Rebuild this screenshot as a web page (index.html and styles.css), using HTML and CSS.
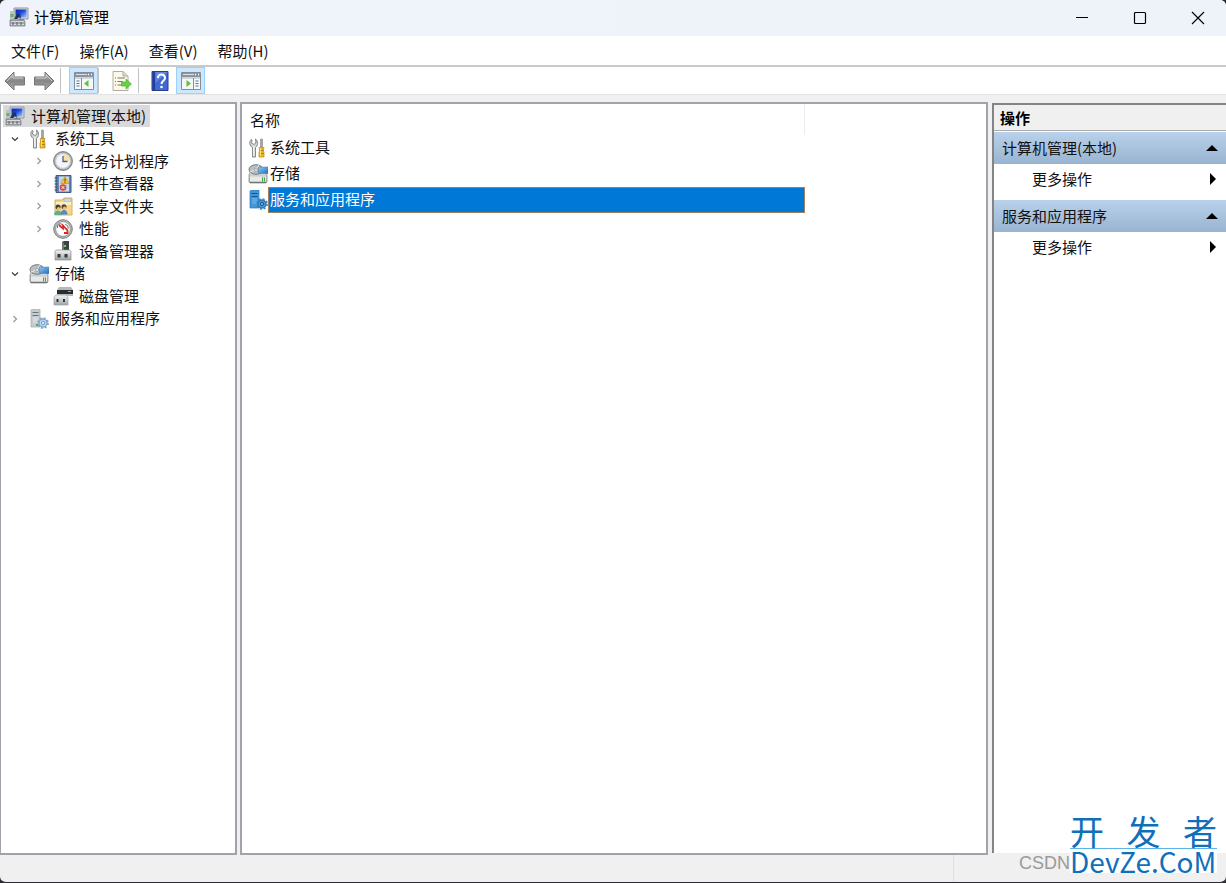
FILE: index.html
```html
<!DOCTYPE html>
<html lang="zh-CN">
<head>
<meta charset="utf-8">
<title>计算机管理</title>
<link rel="stylesheet" href="styles.css">
</head>
<body>
<svg class="sprite" aria-hidden="true">
  <defs>
    <linearGradient id="g-metal" x1="0" y1="0" x2="0" y2="1"><stop offset="0" stop-color="#f4f4f2"/><stop offset="1" stop-color="#9fa3a6"/></linearGradient>
    <linearGradient id="g-arrow" x1="0" y1="0" x2="0" y2="1"><stop offset="0" stop-color="#c4c4c4"/><stop offset=".5" stop-color="#858585"/><stop offset="1" stop-color="#b0b0b0"/></linearGradient>
    <linearGradient id="g-screen" x1="0" y1="0" x2="1" y2="1"><stop offset="0" stop-color="#0b20a8"/><stop offset=".45" stop-color="#1c49dc"/><stop offset="1" stop-color="#a9cdfb"/></linearGradient>
    <linearGradient id="g-blue" x1="0" y1="0" x2="1" y2="1"><stop offset="0" stop-color="#8fc8f3"/><stop offset="1" stop-color="#1d6fc0"/></linearGradient>
  </defs>
  <symbol id="i-computer" viewBox="0 0 20 20">
    <path d="M5 1h14v11H5z" fill="#d5d8dc" stroke="#92979f"/>
    <path d="M6.500 2.500h11v8h-11z" fill="url(#g-screen)"/>
    <path d="M9 12h6v2H9z" fill="#8a8d92"/>
    <path d="M1 4h4v9H1z" fill="#b9c3c5"/><path d="M1.500 7h3v3h-3z" fill="#5dbb45"/>
    <path d="M5 12l2.500-4 1.500-2 2 1 1 5-2-2-2 2z" fill="#20315c"/>
    <path d="M1 13h14l1 2v4H1z" fill="#a3a8ac" stroke="#73787d" stroke-width=".7"/>
    <path d="M2 14.500h13M2 17.500h13" stroke="#d9dcde"/><path d="M4 15v3M8 15v3M12 15v3" stroke="#596066"/>
  </symbol>
  <symbol id="i-tools" viewBox="0 0 20 20">
    <path d="M4.500 19V9.500C1.500 8 1 4 3 1.500l1 .5-.5 3L6 6.500 8 5l-.5-4C10.500 3 10 8 7.500 9.500V19z" fill="#d2d4d3" stroke="#85898a"/>
    <path d="M5.800 8v10" stroke="#fff"/>
    <path d="M12.500 1h2v8h-2z" fill="#a2a8aa" stroke="#757b7d" stroke-width=".5"/>
    <path d="M11 9.500h5l-.8 3 .8 2v4.500h-5v-4.500l.8-2z" fill="#f0b51a" stroke="#c08516" stroke-width=".7"/>
    <path d="M11.500 12.500h4M12 15.500h3.500" stroke="#936616" stroke-width=".8"/><path d="M12.600 10v8" stroke="#ffe478"/>
  </symbol>
  <symbol id="i-clock" viewBox="0 0 20 20">
    <circle cx="10" cy="10" r="9.400" fill="#a5a7aa" stroke="#7d7f83"/><circle cx="10" cy="10" r="8" fill="#d0d1d3"/>
    <circle cx="10" cy="10" r="6.800" fill="#f3f5fa"/><path d="M10 10V3.200A6.800 6.800 0 0 1 16.800 10z" fill="#f7dfaa"/>
    <path d="M10 5v5.500h4.500" fill="none" stroke="#4e6080" stroke-width="1.300"/>
  </symbol>
  <symbol id="i-event" viewBox="0 0 20 20">
    <path d="M3 1.500h15v17H3z" fill="#6386b5" stroke="#3e5d87"/><path d="M6 2.500h10v15H6z" fill="#c9daed"/>
    <path d="M7 6h7M7 9h7M7 12h7M7 15h7" stroke="#a7bad1"/>
    <path d="M1.500 4h3M1.500 7h3M1.500 10h3M1.500 13h3M1.500 16h3" stroke="#3b4a5f"/>
    <path d="M12 2.500l4 7H8z" fill="#ffc52f" stroke="#c78816" stroke-width=".6"/><path d="M12 4.500v3M12 8v1" stroke="#4c3b0c"/>
    <circle cx="10" cy="13.500" r="3.300" fill="#dc4a3e"/><path d="M8.700 12.200l2.600 2.600m0-2.600l-2.600 2.600" stroke="#fff"/>
  </symbol>
  <symbol id="i-folder" viewBox="0 0 20 20">
    <path d="M2 4h7l2-2h8v17H2z" fill="#f3d78a" stroke="#d3b265"/><path d="M11 3h7v2h-7z" fill="#e7eef8" stroke="#87a6cf" stroke-width=".6"/><path d="M3 6h15v3H3z" fill="#fbeebc"/>
    <circle cx="5" cy="11" r="2.500" fill="#4e4030"/><circle cx="5.500" cy="12.500" r="1.600" fill="#edbb8e"/><path d="M1 19c0-6 8-6 8 0z" fill="#62b184"/>
    <circle cx="11" cy="10.800" r="2.500" fill="#5e4330"/><circle cx="11.500" cy="12.200" r="1.600" fill="#edbb8e"/><path d="M7.500 18.500c0-6 7-6 7 0z" fill="#5188c7"/>
  </symbol>
  <symbol id="i-perf" viewBox="0 0 20 20">
    <circle cx="10" cy="10" r="9.300" fill="#b4b4b4" stroke="#7d7f81"/><circle cx="10" cy="10" r="7.300" fill="#fff" stroke="#7c7e80" stroke-width=".6"/>
    <path d="M4.500 9V6.500L7 4.500l2 1M12 5l3 2v3" stroke="#65696c" fill="none" stroke-width=".9"/>
    <path d="M6 6l4 3.500V6.500l4.500 5V14h-3.500" stroke="#dd2925" stroke-width="1.800" fill="none"/>
  </symbol>
  <symbol id="i-device" viewBox="0 0 20 20">
    <path d="M9 1l2-1h5v11H9z" fill="#3f4347"/><path d="M9 1l2 1v9H9z" fill="#73777a"/><path d="M11 4h2v2h-2z" fill="#5be04a"/>
    <path d="M2 10.500L3 9h14l1 1.500V19H2z" fill="url(#g-metal)" stroke="#898c8e" stroke-width=".7"/>
    <path d="M4.500 13h3v3.500h-3zM11.500 13h3v3.500h-3z" fill="#34383b"/>
  </symbol>
  <symbol id="i-storage" viewBox="0 0 20 20">
    <path d="M1 11l2-6h14l2 6v7l-1 1H2l-1-1z" fill="url(#g-metal)" stroke="#7c8182" stroke-width=".7"/>
    <ellipse cx="8" cy="5.500" rx="7" ry="4.800" fill="#b7bfc2" stroke="#747c80"/><path d="M2 8c4-1 8-4 9-7" stroke="#edf0f1" fill="none"/><circle cx="8" cy="6" r="1.500" fill="#eee" stroke="#777" stroke-width=".5"/>
    <path d="M10.500 3H20v6.500h-9.500z" fill="url(#g-blue)" stroke="#3f79aa" stroke-width=".5"/>
    <path d="M2 12.500h16v5H2z" fill="#e9e9e7"/><path d="M14 13.500h3v4h-3z" fill="#37a842"/><path d="M15.500 13.500v4" stroke="#d0edc9"/>
    <path d="M2 18.500h16" stroke="#717676"/>
  </symbol>
  <symbol id="i-disk" viewBox="0 0 20 20">
    <path d="M4 4l2-3h12l2 3v6H4z" fill="#b5b8ba"/><path d="M4 4h16v4H4z" fill="#292d30"/><path d="M15 5h3v1h-3z" fill="#59d347"/>
    <path d="M1 11l2-2h10l2 2v8H1z" fill="url(#g-metal)" stroke="#a0a2a3" stroke-width=".7"/>
    <path d="M3.500 13h2v3h-2zM10 13h2v3h-2z" fill="#34383b"/>
  </symbol>
  <symbol id="i-services" viewBox="0 0 20 20">
    <path d="M2 1l2-1h7v18H2z" fill="#c5cbd0" stroke="#a2abb1" stroke-width=".7"/><path d="M3.500 3.500h6M3.500 6.500h6" stroke="#69757d"/><path d="M4 9h5M4 11h5M4 13h5" stroke="#e6eaec"/><path d="M7 15h2v2H7z" fill="#4eae48"/>
    <circle cx="14" cy="14" r="4" fill="#b9d7ec" stroke="#7da7ca" stroke-width="1.300"/><circle cx="14" cy="14" r="5" fill="none" stroke="#7da7ca" stroke-width="1.800" stroke-dasharray="2 1.930"/><circle cx="14" cy="14" r="1.600" fill="#f5faff" stroke="#6d99be"/>
  </symbol>
  <symbol id="i-services-selected" viewBox="0 0 20 20">
    <path d="M2 1l2-1h7v18H2z" fill="#4197da" stroke="#2877b9" stroke-width=".7"/><path d="M3.500 3.500h6M3.500 6.500h6" stroke="#125391"/><path d="M4 9h5M4 11h5M4 13h5" stroke="#79b8eb"/>
    <circle cx="14" cy="14" r="4" fill="#4998d5" stroke="#2a74b0" stroke-width="1.300"/><circle cx="14" cy="14" r="5" fill="none" stroke="#3a87c6" stroke-width="1.800" stroke-dasharray="2 1.930"/><circle cx="14" cy="14" r="1.600" fill="#7cb9e8" stroke="#16558b"/>
  </symbol>
  <symbol id="i-arrow" viewBox="0 0 22 20">
    <path d="M1 10l9-9v5h10.500v8H10v5z" fill="url(#g-arrow)" stroke="#777"/><path d="M3 10l6-6v3h10" fill="none" stroke="#c9c9c9"/>
  </symbol>
  <symbol id="i-pane" viewBox="0 0 20 18">
    <path d="M.5.500h19v17H.500z" fill="#f5f7f9" stroke="#858d97"/><path d="M1 1h18v4H1z" fill="#8994a2"/><path d="M2 2.500h11" stroke="#dce2e8"/><path d="M14 2.500h1M17 2.500h1" stroke="#fff" stroke-width="1.500"/>
    <path d="M1 6h18" stroke="#adb5bd"/><path d="M7.500 6v11" stroke="#858d97"/><path d="M2.500 9h3M2.500 11.500h3M2.500 14h3" stroke="#4b7bab" stroke-width="1.200"/><path d="M14.500 8v7L10 11.500z" fill="#5cc53a"/>
  </symbol>
  <symbol id="i-action-pane" viewBox="0 0 20 18">
    <path d="M.5.500h19v17H.500z" fill="#f5f7f9" stroke="#858d97"/><path d="M1 1h18v4H1z" fill="#8994a2"/><path d="M2 2.500h11" stroke="#dce2e8"/><path d="M14 2.500h1M17 2.500h1" stroke="#fff" stroke-width="1.500"/>
    <path d="M1 6h18" stroke="#adb5bd"/><path d="M12.500 6v11" stroke="#858d97"/><path d="M14.500 9h3M14.500 11.500h3M14.500 14h3" stroke="#4b7bab" stroke-width="1.200"/><path d="M5.500 8v7l4.500-3.500z" fill="#5cc53a"/>
  </symbol>
  <symbol id="i-export" viewBox="0 0 20 20">
    <path d="M1 .500h10l5 4.500v14.500H1z" fill="#fdf9e8" stroke="#b2ae9f"/><path d="M11 .500V5h5" fill="#ded9c6" stroke="#b2ae9f"/>
    <path d="M3 7h1M3 10.500h1M3 14h1M5.500 7H13M5.500 10.500h5M5.500 14H12" stroke="#77746c" stroke-width="1.200"/>
    <path d="M9.500 11h4.500V8l5.500 5-5.500 5v-3H9.500z" fill="#69d244" stroke="#43a72c" stroke-width=".6"/>
  </symbol>
  <symbol id="i-help" viewBox="0 0 17 20">
    <path d="M.5.500h16v19H.500z" fill="#4169d0" stroke="#263e8e"/><path d="M1 1h2.500v18H1z" fill="#253f95"/><path d="M4 1h12L4 12z" fill="#6186df"/>
    <path d="M6.500 7c0-5 7-4.500 7 0 0 3-3.500 2.500-3.500 6" fill="none" stroke="#fff" stroke-width="2"/><circle cx="10" cy="16" r="1.300" fill="#fff"/>
  </symbol>
  <symbol id="i-open" viewBox="0 0 10 10"><path d="M2 3.500l3 3 3-3" fill="none" stroke="#3b3b3b" stroke-width="1.200"/></symbol>
  <symbol id="i-closed" viewBox="0 0 10 10"><path d="M3.500 2l3 3-3 3" fill="none" stroke="#999" stroke-width="1.200"/></symbol>
</svg>

<div class="window">
  <header class="titlebar">
    <svg class="icon"><use href="#i-computer"/></svg>
    <h1 class="title">计算机管理</h1>
    <div class="window-controls">
      <button class="window-button" aria-label="最小化"><svg class="glyph" viewBox="0 0 14 14"><path d="M1 6.500h12" stroke="#000"/></svg></button>
      <button class="window-button" aria-label="最大化"><svg class="glyph" viewBox="0 0 14 14"><rect x="1.500" y="1.500" width="11" height="11" rx="1" fill="none" stroke="#000" stroke-width="1.200"/></svg></button>
      <button class="window-button" aria-label="关闭"><svg class="glyph" viewBox="0 0 14 14"><path d="M1 1l12 12M13 1L1 13" stroke="#000" stroke-width="1.200"/></svg></button>
    </div>
  </header>
  <nav class="menubar" aria-label="菜单">
    <button class="menu">文件(F)</button>
    <button class="menu">操作(A)</button>
    <button class="menu">查看(V)</button>
    <button class="menu">帮助(H)</button>
  </nav>
  <div class="toolbar">
    <div class="tool-group">
      <button class="tool" aria-label="后退"><svg class="icon icon-arrow"><use href="#i-arrow"/></svg></button>
      <button class="tool" aria-label="前进"><svg class="icon icon-arrow icon-forward"><use href="#i-arrow"/></svg></button>
    </div>
    <div class="tool-group tool-group-tree">
      <button class="tool tool-on" aria-label="显示/隐藏控制台树"><svg class="icon icon-pane"><use href="#i-pane"/></svg></button>
    </div>
    <div class="tool-group tool-group-export">
      <button class="tool" aria-label="导出列表"><svg class="icon"><use href="#i-export"/></svg></button>
    </div>
    <div class="tool-group tool-group-help">
      <button class="tool" aria-label="帮助"><svg class="icon"><use href="#i-help"/></svg></button>
      <button class="tool tool-on" aria-label="显示/隐藏操作窗格"><svg class="icon icon-pane"><use href="#i-action-pane"/></svg></button>
    </div>
  </div>

  <main class="panes">
    <nav class="tree-pane" aria-label="控制台树">
      <ul class="tree">
        <li class="node root"><svg class="icon"><use href="#i-computer"/></svg><span class="label">计算机管理(本地)</span></li>
        <li class="node"><button class="toggle" aria-label="折叠"><svg class="chevron"><use href="#i-open"/></svg></button><svg class="icon"><use href="#i-tools"/></svg><span class="label">系统工具</span></li>
        <li class="node child"><button class="toggle" aria-label="展开"><svg class="chevron"><use href="#i-closed"/></svg></button><svg class="icon"><use href="#i-clock"/></svg><span class="label">任务计划程序</span></li>
        <li class="node child"><button class="toggle" aria-label="展开"><svg class="chevron"><use href="#i-closed"/></svg></button><svg class="icon"><use href="#i-event"/></svg><span class="label">事件查看器</span></li>
        <li class="node child"><button class="toggle" aria-label="展开"><svg class="chevron"><use href="#i-closed"/></svg></button><svg class="icon"><use href="#i-folder"/></svg><span class="label">共享文件夹</span></li>
        <li class="node child"><button class="toggle" aria-label="展开"><svg class="chevron"><use href="#i-closed"/></svg></button><svg class="icon"><use href="#i-perf"/></svg><span class="label">性能</span></li>
        <li class="node child"><span class="toggle"></span><svg class="icon"><use href="#i-device"/></svg><span class="label">设备管理器</span></li>
        <li class="node"><button class="toggle" aria-label="折叠"><svg class="chevron"><use href="#i-open"/></svg></button><svg class="icon"><use href="#i-storage"/></svg><span class="label">存储</span></li>
        <li class="node child"><span class="toggle"></span><svg class="icon"><use href="#i-disk"/></svg><span class="label">磁盘管理</span></li>
        <li class="node"><button class="toggle" aria-label="展开"><svg class="chevron"><use href="#i-closed"/></svg></button><svg class="icon"><use href="#i-services"/></svg><span class="label">服务和应用程序</span></li>
      </ul>
    </nav>

    <section class="list-pane">
      <table class="list">
        <thead><tr><th class="list-head" scope="col">名称</th></tr></thead>
        <tbody>
          <tr><td class="list-cell"><div class="item"><svg class="icon"><use href="#i-tools"/></svg><span class="item-name">系统工具</span></div></td></tr>
          <tr><td class="list-cell"><div class="item"><svg class="icon"><use href="#i-storage"/></svg><span class="item-name">存储</span></div></td></tr>
          <tr><td class="list-cell"><div class="item"><svg class="icon"><use href="#i-services-selected"/></svg><span class="item-name selected">服务和应用程序</span></div></td></tr>
        </tbody>
      </table>
    </section>

    <aside class="actions-pane">
      <h2 class="actions-title">操作</h2>
      <section class="action-group">
        <button class="action-head">计算机管理(本地)<svg class="mark" viewBox="0 0 12 12"><path d="M0 9l6-6 6 6z"/></svg></button>
        <button class="action">更多操作<svg class="mark" viewBox="0 0 12 12"><path d="M3 0l6 6-6 6z"/></svg></button>
      </section>
      <section class="action-group">
        <button class="action-head">服务和应用程序<svg class="mark" viewBox="0 0 12 12"><path d="M0 9l6-6 6 6z"/></svg></button>
        <button class="action">更多操作<svg class="mark" viewBox="0 0 12 12"><path d="M3 0l6 6-6 6z"/></svg></button>
      </section>
    </aside>
  </main>
  <footer class="statusbar"><span class="status-cell"></span></footer>

  <div class="watermark">
    <span class="csdn">CSDN</span>
    <div class="brand">
      <div class="brand-top"><span>开</span><span>发</span><span>者</span></div>
      <div class="brand-bottom">DevZe.CoM</div>
    </div>
  </div>
</div>
</body>
</html>
```
FILE: styles.css
```css
* { box-sizing: border-box; }

body {
  margin: 0;
  background: #2b2b30;
  color: #111;
  font: 15px/20px "Noto Sans CJK SC", sans-serif;
}

button {
  display: flex;
  align-items: center;
  margin: 0;
  padding: 0;
  border: 0;
  background: none;
  color: inherit;
  font: inherit;
}

svg { display: block; flex: none; }
.sprite { position: absolute; width: 0; height: 0; }
.icon { width: 20px; height: 20px; }

.window {
  position: relative;
  display: flex;
  flex-direction: column;
  height: 100vh;
  border-bottom: 1px solid #2b2b30;
  border-radius: 6px;
  overflow: hidden;
  background: #f0f0f0;
}

.titlebar {
  display: flex;
  align-items: center;
  height: 36px;
  padding: 0 0 2px 9px;
  gap: 5px;
  background: linear-gradient(90deg, #f0f3fb, #edf3f8);
}
.title { flex: 1; margin: 0; font-size: 15px; font-weight: 400; line-height: 20px; color: #000; }
.window-controls { display: flex; padding-top: 2px; }
.window-button { justify-content: center; width: 58px; height: 34px; }
.glyph { width: 14px; height: 14px; }
.window-button:last-child { width: 57px; }

.menubar {
  display: flex;
  gap: 20px;
  height: 31px;
  padding-left: 11px;
  border-bottom: 2px solid #c9cacc;
  background: #fff;
}

.toolbar {
  display: flex;
  height: 28px;
  border-bottom: 1px solid #e3e3e3;
  background: #fff;
}
.tool-group { display: flex; align-items: center; }
.tool-group + .tool-group::before {
  content: "";
  width: 1px;
  height: 25px;
  background: #c2c2c2;
}
.tool { justify-content: center; width: 29px; height: 27px; }
.tool-group:first-child { padding-right: 2px; }
.tool-group-tree { gap: 8px; }
.tool-group-export { gap: 8px; padding-right: 2px; }
.tool-group-help { padding-right: 2px; }
.tool-group-help::before { margin-right: 6px; }
.tool-group-help .tool + .tool { margin-left: 2px; }
.tool-on { border: 1px solid #99d1ff; background: #cce8ff; }
.icon-arrow { width: 22px; }
.icon-forward { transform: scaleX(-1); }
.icon-pane { height: 18px; }

.panes {
  display: grid;
  grid-template-columns: 237px minmax(0, 1fr) 234px;
  flex: 1;
  min-height: 0;
  padding-top: 7px;
}

.tree-pane {
  border: solid #a0a4aa;
  border-width: 2px 2px 2px 1px;
  background: #fff;
}
.tree {
  display: grid;
  grid-auto-rows: 22px 23px;
  margin: 0;
  padding: 1px 0 0;
  list-style: none;
}
.node { display: flex; align-items: center; gap: 6px; padding-left: 6px; }
.child { padding-left: 30px; }
.root { justify-self: start; margin-left: 2px; padding: 0 4px 0 2px; background: #d9d9d9; }
.label { white-space: nowrap; line-height: 18px; padding-bottom: 1px; }
.toggle { display: flex; justify-content: center; width: 16px; height: 20px; }
.chevron { width: 10px; height: 10px; }

.list-pane {
  margin: 0 4px 0 3px;
  border: 2px solid #a0a4aa;
  background: #fff;
}
.list { width: calc(100% - 181px); border-collapse: collapse; }
.list-head {
  height: 31px;
  padding: 0 8px;
  border-right: 1px solid #ececec;
  font-weight: 400;
  text-align: left;
}
.list-cell { height: 26px; padding: 0 0 0 6px; }
.item { display: flex; align-items: center; }
.item-name { flex: 1; height: 26px; padding: 2px; }
.selected { padding: 1px; border: 1px solid #a0805e; background: #0078d7; color: #fff; }

.actions-pane {
  margin: 1px 0 2px;
  border: solid #858585;
  border-width: 2px 0 0 2px;
  background: #fff;
}
.actions-title {
  height: 26px;
  margin: 0 0 1px;
  padding: 3px 6px;
  border-bottom: 1px solid #aaa;
  background: #f0f0f0;
  color: #000;
  font-size: 15px;
  font-weight: 700;
}
.action-group { padding-bottom: 6px; }
.action-head, .action {
  justify-content: space-between;
  width: 100%;
  height: 32px;
  padding: 0 8px;
}
.action-head { background: linear-gradient(#b9d1ea, #99b4d1); }
.action { height: 30px; padding-left: 38px; }
.mark { width: 12px; height: 12px; fill: #000; }
.action .mark { margin-right: -1px; }

.statusbar { display: flex; justify-content: flex-end; height: 27px; }
.status-cell { width: 273px; border-left: 1px solid #dedede; }

.watermark {
  position: absolute;
  right: 9px;
  bottom: 9px;
  display: flex;
  align-items: flex-end;
}
.csdn { color: #9a9a9a; font: 18px/20px "Liberation Sans", sans-serif; }
.brand { width: 147px; color: #0f6fbb; }
.brand-top {
  display: flex;
  justify-content: space-between;
  border-bottom: 1px solid #5db4ea;
  font-size: 34px;
  line-height: 34px;
}
.brand-bottom { background: #fff; font-size: 28px; line-height: 24px; white-space: nowrap; }
```
